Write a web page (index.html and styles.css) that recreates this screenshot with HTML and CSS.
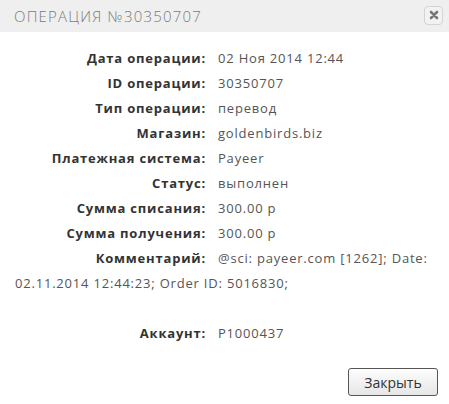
FILE: index.html
```html
<!DOCTYPE html>
<html lang="ru">
<head>
<meta charset="utf-8">
<link rel="stylesheet" href="styles.css">
</head>
<body>
<div class="dialog">
  <div class="header">
    <span class="title">Операция №30350707</span>
    <button class="close" aria-label="close">
      <svg width="10" height="10" viewBox="0 0 10 10"><path d="M2 2 L8 8 M8 2 L2 8" stroke="#777" stroke-width="2.6" stroke-linecap="round"/></svg>
    </button>
  </div>
  <div class="body">
    <div class="row"><span class="label">Дата операции:</span><span class="value">02 Ноя 2014 12:44</span></div>
    <div class="row"><span class="label">ID операции:</span><span class="value">30350707</span></div>
    <div class="row"><span class="label">Тип операции:</span><span class="value">перевод</span></div>
    <div class="row"><span class="label">Магазин:</span><span class="value">goldenbirds.biz</span></div>
    <div class="row"><span class="label">Платежная система:</span><span class="value">Payeer</span></div>
    <div class="row"><span class="label">Статус:</span><span class="value">выполнен</span></div>
    <div class="row"><span class="label">Сумма списания:</span><span class="value">300.00 р</span></div>
    <div class="row"><span class="label">Сумма получения:</span><span class="value">300.00 р</span></div>
    <div class="row"><span class="label">Комментарий:</span><span class="value">@sci: payeer.com [1262]; Date: 02.11.2014 12:44:23; Order ID: 5016830;</span></div>
    <div class="row empty"></div>
    <div class="row"><span class="label">Аккаунт:</span><span class="value">P1000437</span></div>
  </div>
  <div class="footer">
    <button class="btn">Закрыть</button>
  </div>
</div>
</body>
</html>
```
FILE: styles.css
```css
html, body {
  margin: 0;
  padding: 0;
  background: #fff;
}
.dialog {
  width: 449px;
  font-family: "Open Sans", "DejaVu Sans", sans-serif;
  color: #555;
}
.header {
  height: 32px;
  background: #efefef;
  display: flex;
  align-items: center;
  justify-content: space-between;
  padding: 0 6px 0 14px;
  box-sizing: border-box;
}
.title {
  font-size: 15px;
  font-weight: 300;
  text-transform: uppercase;
  letter-spacing: 1.2px;
  color: #7a7a7a;
}
.close {
  width: 19px;
  height: 19px;
  padding: 0;
  border: 1px solid #d4d4d4;
  border-radius: 4px;
  background: #f2f2f2;
  display: flex;
  align-items: center;
  justify-content: center;
  margin-top: -2px;
}
.body {
  padding: 14px 15px 0 15px;
}
.row {
  font-size: 13px;
  line-height: 25px;
  letter-spacing: 0.8px;
}
.row.empty {
  height: 25px;
}
.label {
  display: inline-block;
  width: 191px;
  text-align: right;
  margin-right: 12px;
  font-weight: 700;
  color: #333;
}
.value {
  color: #555;
}
.footer {
  display: flex;
  justify-content: flex-end;
  padding: 22px 11px 0 0;
}
.btn {
  width: 90px;
  height: 28px;
  border: 1px solid #555;
  border-radius: 3px;
  background: linear-gradient(#fdfdfd, #e6e6e6);
  font-family: "Open Sans", "DejaVu Sans", sans-serif;
  font-size: 14px;
  color: #333;
}
```
